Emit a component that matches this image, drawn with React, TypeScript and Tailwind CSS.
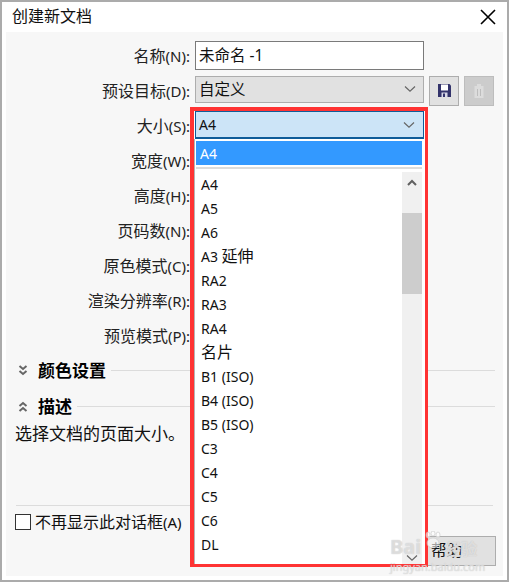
const FONT = "font-['Noto_Sans','Noto_Sans_CJK_SC',sans-serif]";

const LABELS = ["名称(N):", "预设目标(D):", "大小(S):", "宽度(W):", "高度(H):", "页码数(N):", "原色模式(C):", "渲染分辨率(R):", "预览模式(P):"];
const ITEMS = ["A4", "A5", "A6", "A3 延伸", "RA2", "RA3", "RA4", "名片", "B1 (ISO)", "B4 (ISO)", "B5 (ISO)", "C3", "C4", "C5", "C6", "DL", "B4"];

/* CJK runs sit at the full size, Latin runs slightly smaller, as in the original UI font */
function Mixed({ text, wide }: { text: string; wide?: boolean }) {
  const parts = text.split(/([\u3000-\u9fff]+)/).filter(Boolean);
  return (
    <>
      {parts.map((p, i) =>
        /[\u3000-\u9fff]/.test(p) ? (
          <span key={i} className="text-[16px]">{p}</span>
        ) : (
          <span key={i} className={wide ? "text-[15px]" : "text-[14px]"}>{p}</span>
        )
      )}
    </>
  );
}

function Chevron() {
  return (
    <svg width="14" height="8" viewBox="0 0 14 8" fill="none" stroke="#666" strokeWidth="1.2">
      <path d="M2 1.5 L7 6.2 L12 1.5" />
    </svg>
  );
}

function DoubleChevron({ up }: { up?: boolean }) {
  return (
    <svg width="10" height="11" viewBox="0 0 10 11" fill="none" stroke="#666" strokeWidth="2" className={up ? "rotate-180" : ""}>
      <path d="M1.5 1 L5 4 L8.5 1" />
      <path d="M1.5 6 L5 9 L8.5 6" />
    </svg>
  );
}

function SectionHead({ title, up }: { title: string; up?: boolean }) {
  return (
    <div className="flex items-center h-[35px]">
      <div className="w-[32px] pl-[12px] flex items-center">
        <DoubleChevron up={up} />
      </div>
      <span className="text-[17px] font-bold text-black">{title}</span>
      <div className="flex-1 h-px bg-[#dcdcdc] ml-[5px] mr-[8px]" />
    </div>
  );
}

export default function App() {
  return (
    <div className={`relative w-[509px] h-[582px] overflow-hidden bg-white border-2 border-[#ababab] flex flex-col text-[16px] text-[#111] ${FONT}`}>
      <div className="h-[30px] shrink-0 flex items-center justify-between pl-[10px] pr-[11px]">
        <span className="text-[16px] leading-none -mt-[2px]">创建新文档</span>
        <svg width="16" height="16" viewBox="0 0 16 16" stroke="#000" strokeWidth="1.6" fill="none">
          <path d="M1 1 L15 15 M15 1 L1 15" />
        </svg>
      </div>

      <div className="flex-1 mx-[4px] mb-[4px] bg-[#f7f7f7] flex flex-col pt-[6px]">
        <div className="flex flex-col">
          {LABELS.map((label, i) => (
            <div key={label} className="flex items-center h-[35px]">
              <div className="w-[184px] text-right whitespace-nowrap text-[#222]"><Mixed text={label} wide /></div>
              {i === 0 && (
                <div className="ml-[5px] w-[229px] h-[29px] border border-[#7a7a7a] bg-white flex items-center pl-[3px] text-[15.5px]">
                  未命名 -1
                </div>
              )}
              {i === 1 && (
                <div className="flex items-center ml-[5px]">
                  <div className="w-[229px] h-[27px] border border-[#adadad] bg-[#e1e1e1] flex items-center justify-between pl-[3px] pr-[6px] text-[15.5px] -mt-[3px]">
                    <span className="pt-[2px]">自定义</span>
                    <Chevron />
                  </div>
                  <div className="ml-[5px] w-[30px] h-[30px] border border-[#adadad] bg-[#e1e1e1] flex items-center justify-center">
                    <svg width="13" height="13" viewBox="0 0 13 13">
                      <path d="M0 0 H11.5 L13 1.5 V13 H0 Z" fill="#33336b" />
                      <rect x="3" y="0.5" width="7" height="6" fill="#fff" />
                      <rect x="3.5" y="8.5" width="6" height="4.5" fill="#d8d8e8" />
                      <rect x="5" y="9.5" width="2" height="3.5" fill="#33336b" />
                    </svg>
                  </div>
                  <div className="ml-[5px] w-[30px] h-[30px] border border-[#bdbdbd] bg-[#cccccc] flex items-center justify-center">
                    <svg width="10" height="14" viewBox="0 0 10 14">
                      <rect x="0.5" y="2" width="9" height="12" fill="#dcdcdc" />
                      <rect x="3" y="0" width="4" height="2" fill="#dcdcdc" />
                      <rect x="3" y="5" width="1" height="7" fill="#bdbdbd" />
                      <rect x="6" y="5" width="1" height="7" fill="#bdbdbd" />
                    </svg>
                  </div>
                </div>
              )}
            </div>
          ))}
        </div>

        <div>
          <SectionHead title="颜色设置" />
          <div className="mt-px">
            <SectionHead title="描述" up />
          </div>
        </div>
        <div className="pl-[9px] text-[17px] leading-[23px] -mt-[2px]">选择文档的页面大小。</div>

        <div className="h-px bg-[#dcdcdc] ml-[10px] mr-[10px] mt-[60px]" />
        <div className="flex items-center pl-[9px] mt-[7px] h-[17px]">
          <div className="w-[16px] h-[16px] border border-[#333] bg-white" />
          <span className="ml-[4px]"><Mixed text="不再显示此对话框(A)" wide /></span>
        </div>
        <div className="flex justify-end pr-[7px] mt-[6px]">
          <div className="w-[99px] h-[30px] border border-[#adadad] bg-[#e1e1e1] flex items-center justify-center text-[15.5px]">帮助</div>
        </div>
      </div>

      {/* open drop-down over the form */}
      <div className="absolute left-[188px] top-[105px] w-[238px] h-[460px] border-l-4 border-t-4 border-r-[3px] border-b-[3px] border-[#ff3333] bg-white flex flex-col overflow-hidden">
        <div className="h-[28px] mx-px shrink-0 border border-b-2 border-[#0f5c99] bg-[#cce4f7] flex items-center justify-between pl-[3px] pr-[7px] text-[14px]">
          <span>A4</span>
          <Chevron />
        </div>
        <div className="flex-1 min-h-0 border-l border-[#b5b5b5] pl-px pt-[2px] pr-[3px] flex flex-col">
          <div className="h-[24px] shrink-0 bg-[#3399ff] text-white text-[14px] flex items-center pl-[4px]">A4</div>
          <div className="h-[2px] shrink-0 bg-[#dcdcdc] mt-[2px] mb-[3px]" />
          <div className="flex-1 min-h-0 flex overflow-hidden">
            <div className="flex-1 flex flex-col">
              {ITEMS.map((it, i) => (
                <div key={i} className="h-[24px] shrink-0 flex items-center pl-[5px] whitespace-pre"><Mixed text={it} /></div>
              ))}
            </div>
            <div className="w-[20px] bg-[#f0f0f0] flex flex-col items-center">
              <div className="h-[17px] flex items-center pt-[3px]">
                <svg width="10" height="7" viewBox="0 0 10 7" fill="none" stroke="#606060" strokeWidth="2">
                  <path d="M1 6 L5 2 L9 6" />
                </svg>
              </div>
              <div className="h-[81px] w-full bg-[#cdcdcd] mt-[24px]" />
              <div className="flex-1" />
              <div className="pb-[2px]">
                <Chevron />
              </div>
            </div>
          </div>
        </div>
      </div>

      {/* watermark */}
      <div className="absolute left-[388px] top-[527px] w-[100px] h-[44px] pointer-events-none text-[#f4f4f4]/60 [text-shadow:0_0_1px_#b8b8b8] leading-none">
        <div className="flex items-end h-[28px]">
          <span className="text-[20px] font-bold">Bai</span>
          <svg width="20" height="18" viewBox="0 0 20 18" className="mb-[8px] ml-[2px] mr-[2px]" fill="#ffffff" fillOpacity="0.6" stroke="#c4c4c4" strokeWidth="0.6">
            <ellipse cx="5" cy="4" rx="2" ry="3" />
            <ellipse cx="10" cy="2.5" rx="2" ry="2.5" />
            <ellipse cx="15" cy="4" rx="2" ry="3" />
            <ellipse cx="10" cy="12" rx="6" ry="5" />
          </svg>
          <span className="text-[16px] font-bold">经验</span>
        </div>
        <div className="text-[11px] mt-[4px] whitespace-nowrap">jingyan.baidu.com</div>
      </div>
    </div>
  );
}
